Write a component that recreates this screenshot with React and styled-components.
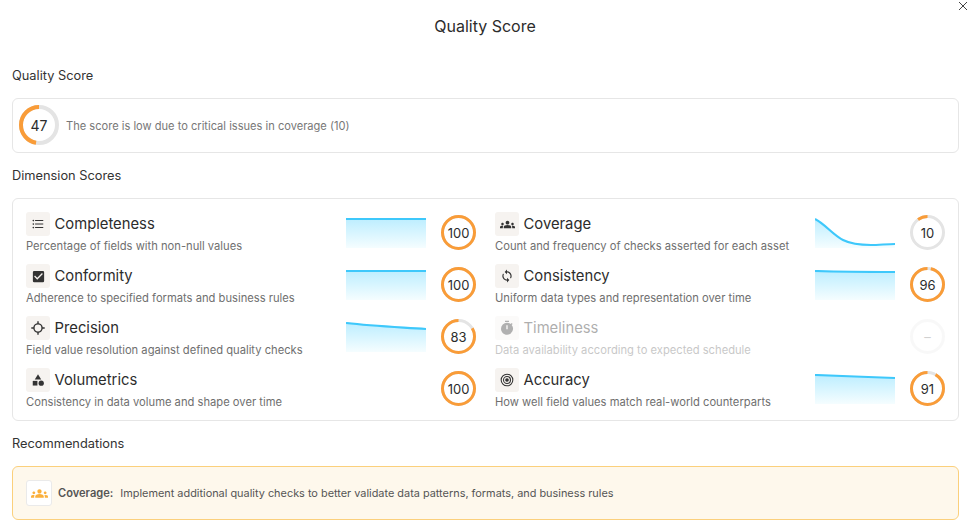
import React from 'react';
import styled, { createGlobalStyle } from 'styled-components';
import {
  MdFormatListBulleted, MdCheckBox, MdCategory, MdGroups, MdSync, MdTimer,
} from 'react-icons/md';

const GlobalStyle = createGlobalStyle`
  html, body { margin: 0; background: #fff; }
  body { font-family: Inter, "Noto Sans", "Liberation Sans", sans-serif; overflow: hidden; }
`;

const Dialog = styled.div`
  position: relative;
  width: 974px;
  height: 531px;
  box-sizing: border-box;
  padding: 0 15px 0 12px;
`;

const CloseButton = styled.div`
  position: absolute;
  top: 0;
  right: 5px;
  color: #444;
  line-height: 0;
`;

const Title = styled.h1`
  margin: 0;
  height: 53px;
  line-height: 53px;
  font-size: 16px;
  font-weight: 400;
  color: #2c2c2c;
  text-align: center;
  padding-right: 1px;
`;

const SectionTitle = styled.h2`
  margin: 0;
  height: 45px;
  line-height: 45px;
  font-size: 12.8px;
  font-weight: 400;
  color: #333;
`;

const Card = styled.div`
  box-sizing: border-box;
  border: 1px solid #e6e6e6;
  border-radius: 6px;
`;

const SummaryCard = styled(Card)`
  height: 55px;
  display: flex;
  align-items: center;
  gap: 7px;
  padding-left: 6px;
`;

const SummaryText = styled.span`
  font-size: 11.1px;
  color: #777;
`;

const DimensionCard = styled(Card)`
  height: 223px;
  padding: 13px 13px 0;
  display: grid;
  grid-template-columns: 450px 450px;
  column-gap: 19px;
  grid-auto-rows: 42px;
  row-gap: 10px;
`;

const Row = styled.div`
  display: flex;
  align-items: center;
  opacity: ${p => (p.$muted ? 0.38 : 1)};
`;

const RowText = styled.div`
  flex: 1;
  min-width: 0;
`;

const RowHead = styled.div`
  display: flex;
  align-items: center;
  gap: 4.5px;
  height: 24px;
  margin-bottom: 3px;
`;

const IconBox = styled.span`
  width: 24px;
  height: 24px;
  border-radius: 3px;
  background: #f6f3f0;
  color: #333;
  display: flex;
  align-items: center;
  justify-content: center;
  flex: none;
`;

const RowName = styled.span`
  font-size: 14.8px;
  line-height: 24px;
  color: #2c2c2c;
`;

const RowDesc = styled.div`
  font-size: 11.2px;
  line-height: 15px;
  color: #6f6f6f;
  white-space: nowrap;
`;

const SparkSlot = styled.div`
  width: 80px;
  height: 30px;
  flex: none;
  margin-right: 15.5px;
  line-height: 0;
`;

const RingWrap = styled.div`
  width: ${p => p.$size}px;
  height: ${p => p.$size}px;
  flex: none;
  display: grid;
  place-items: center;
  margin-top: -1px;

  svg, span { grid-area: 1 / 1; }
  svg { transform: scaleX(-1) rotate(-90deg); }
`;

const RingValue = styled.span`
  font-size: ${p => p.$fontSize}px;
  color: ${p => (p.$empty ? '#888' : '#2c2c2c')};
`;

const RecommendCard = styled(Card)`
  height: 54px;
  background: #fef8ec;
  border-color: #fbd07c;
  display: flex;
  align-items: center;
  padding-left: 13px;
  font-size: 10.9px;
  color: #555;
`;

const RecommendIcon = styled.span`
  width: 26px;
  height: 26px;
  box-sizing: border-box;
  background: #fff;
  border: 1px solid #eaeaea;
  border-radius: 3px;
  color: #fbb03b;
  display: flex;
  align-items: center;
  justify-content: center;
  margin-right: 6px;
`;

const RecommendLabel = styled.strong`
  font-size: 11.1px;
  font-weight: 600;
  margin-right: 7px;
`;

const TargetIcon = () => (
  <svg width="14" height="14" viewBox="0 0 24 24" fill="none" stroke="currentColor" strokeWidth="1.8">
    <circle cx="12" cy="12" r="10" />
    <circle cx="12" cy="12" r="6" />
    <circle cx="12" cy="12" r="2.2" fill="currentColor" />
  </svg>
);

const CrosshairIcon = () => (
  <svg width="14" height="14" viewBox="0 0 24 24" fill="none" stroke="currentColor" strokeWidth="2.4">
    <circle cx="12" cy="12" r="7" />
    <path d="M12 0.5 V5 M12 19 V23.5 M0.5 12 H5 M19 12 H23.5" />
  </svg>
);

const Ring = ({ value, size = 35, stroke = 3 }) => {
  const empty = value == null;
  const r = (size - stroke) / 2;
  const c = 2 * Math.PI * r;
  return (
    <RingWrap $size={size}>
      <svg width={size} height={size}>
        <circle cx={size / 2} cy={size / 2} r={r} fill="none" stroke={empty ? '#efefef' : '#e4e4e4'} strokeWidth={stroke} />
        {!empty && (
          <circle
            cx={size / 2}
            cy={size / 2}
            r={r}
            fill="none"
            stroke="#f99c38"
            strokeWidth={stroke}
            strokeDasharray={`${(c * value) / 100} ${c}`}
          />
        )}
      </svg>
      <RingValue $empty={empty} $fontSize={size > 36 ? 14 : 13}>{empty ? '–' : value}</RingValue>
    </RingWrap>
  );
};

const Spark = ({ id, line }) => (
  <svg width="80" height="30" viewBox="0 0 80 30">
    <defs>
      <linearGradient id={id} x1="0" y1="0" x2="0" y2="1">
        <stop offset="0" stopColor="#bdeeff" />
        <stop offset="1" stopColor="#f5fdff" />
      </linearGradient>
    </defs>
    <path d={`${line} L80 30 L0 30 Z`} fill={`url(#${id})`} />
    <path d={line} fill="none" stroke="#3ec8fb" strokeWidth="2.2" />
  </svg>
);

const dimensions = [
  { name: 'Completeness', desc: 'Percentage of fields with non-null values', icon: <MdFormatListBulleted size={14} />, score: 100, line: 'M0 1 L80 1' },
  { name: 'Coverage', desc: 'Count and frequency of checks asserted for each asset', icon: <MdGroups size={15} />, score: 10, line: 'M0 1 C10 6 18 17 28 22 C38 27 48 27 56 27 C64 27 72 26 80 26' },
  { name: 'Conformity', desc: 'Adherence to specified formats and business rules', icon: <MdCheckBox size={15} />, score: 100, line: 'M0 1 L80 1' },
  { name: 'Consistency', desc: 'Uniform data types and representation over time', icon: <MdSync size={14} />, score: 96, line: 'M0 1 C30 2 50 2 80 2' },
  { name: 'Precision', desc: 'Field value resolution against defined quality checks', icon: <CrosshairIcon />, score: 83, line: 'M0 1 C25 4 50 5 80 7' },
  { name: 'Timeliness', desc: 'Data availability according to expected schedule', icon: <MdTimer size={16} />, score: null },
  { name: 'Volumetrics', desc: 'Consistency in data volume and shape over time', icon: <MdCategory size={14} />, score: 100 },
  { name: 'Accuracy', desc: 'How well field values match real-world counterparts', icon: <TargetIcon />, score: 91, line: 'M0 1 C30 2 50 3 80 4' },
];

const App = () => (
  <Dialog>
    <GlobalStyle />
    <CloseButton>
      <svg width="12" height="12" viewBox="0 0 12 12" stroke="currentColor" strokeWidth="1" fill="none">
        <path d="M2 2 L10 10 M10 2 L2 10" />
      </svg>
    </CloseButton>
    <Title>Quality Score</Title>
    <SectionTitle>Quality Score</SectionTitle>
    <SummaryCard>
      <Ring value={47} size={40} stroke={4} />
      <SummaryText>The score is low due to critical issues in coverage (10)</SummaryText>
    </SummaryCard>
    <SectionTitle>Dimension Scores</SectionTitle>
    <DimensionCard>
      {dimensions.map(d => (
        <Row key={d.name} $muted={d.score == null}>
          <RowText>
            <RowHead>
              <IconBox>{d.icon}</IconBox>
              <RowName>{d.name}</RowName>
            </RowHead>
            <RowDesc>{d.desc}</RowDesc>
          </RowText>
          <SparkSlot>{d.line && <Spark id={`spark-${d.name}`} line={d.line} />}</SparkSlot>
          <Ring value={d.score} />
        </Row>
      ))}
    </DimensionCard>
    <SectionTitle>Recommendations</SectionTitle>
    <RecommendCard>
      <RecommendIcon><MdGroups size={17} /></RecommendIcon>
      <RecommendLabel>Coverage:</RecommendLabel>
      Implement additional quality checks to better validate data patterns, formats, and business rules
    </RecommendCard>
  </Dialog>
);

export default App;
